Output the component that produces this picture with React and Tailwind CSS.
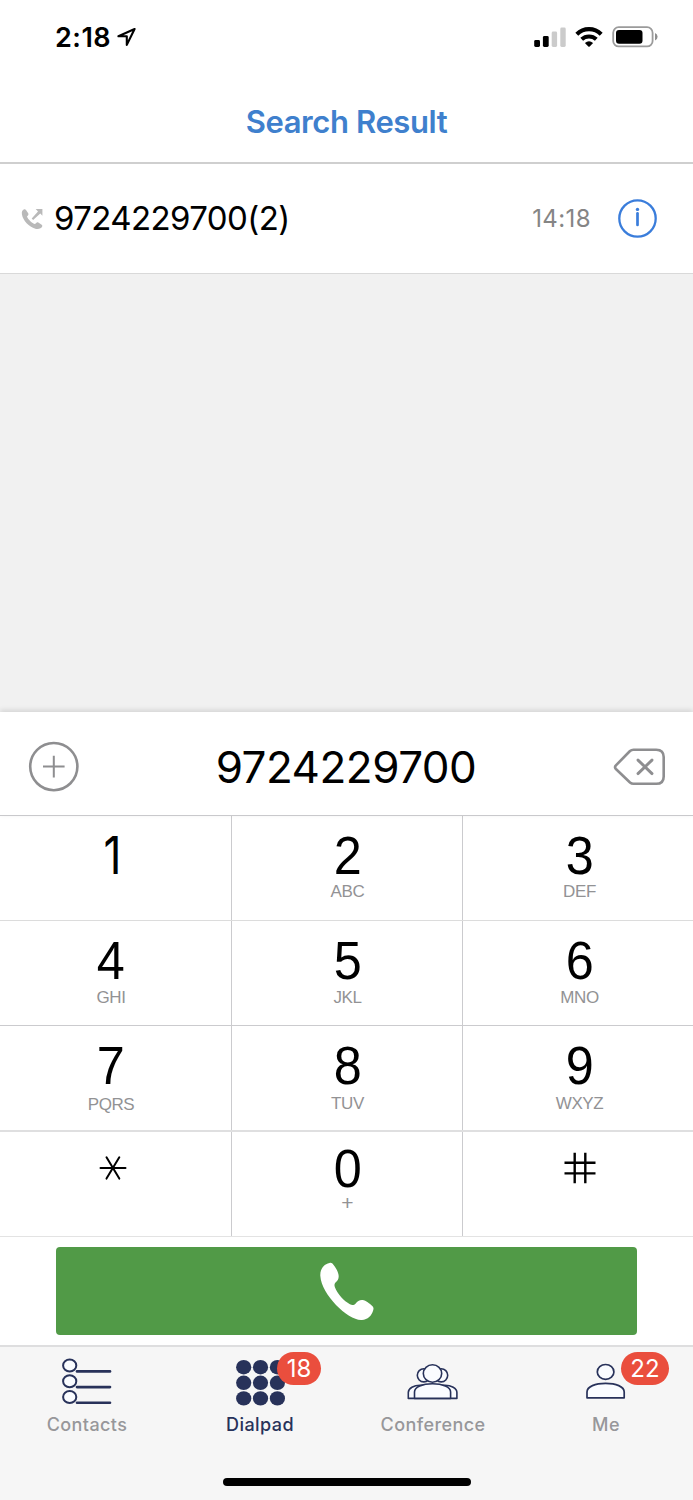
import React from 'react'

const keys = [
  [{ digit: '1', letters: '' }, { digit: '2', letters: 'ABC' }, { digit: '3', letters: 'DEF' }],
  [{ digit: '4', letters: 'GHI' }, { digit: '5', letters: 'JKL' }, { digit: '6', letters: 'MNO' }],
  [{ digit: '7', letters: 'PQRS' }, { digit: '8', letters: 'TUV' }, { digit: '9', letters: 'WXYZ' }],
  [{ digit: '*', letters: '' }, { digit: '0', letters: '+' }, { digit: '#', letters: '' }],
];

const columnClass = [
  'w-[232px] border-r pr-[9px]',
  'w-[231px] border-r pl-px',
  'w-[230px] pl-[3px]',
];

const rowClass = [
  'h-[105px] border-b border-[#dcdcdc]',
  'h-[105px] border-b border-[#cbcbce]',
  'h-[106px] border-b-2 border-[#dfdfe0]',
  'h-[105px] border-b border-[#e3e3e3]',
];

const StatusBar = () => (
  <div className="flex h-[74px] items-center justify-between pl-[55px] pr-[35px]">
    <div className="flex items-center gap-[6px]">
      <span className="text-[27px] leading-none font-semibold tracking-[0.5px]">2:18</span>
      <svg width="20" height="20" viewBox="0 0 20 20" fill="none" stroke="#000" strokeWidth="2.1" strokeLinejoin="round">
        <path d="M17.6 2 L1.4 9.3 H9.8 V17.9 Z" />
      </svg>
    </div>
    <div className="flex items-center">
      <svg width="32" height="20" viewBox="0 0 32 20">
        <rect x="0.2" y="13" width="5.8" height="7" rx="1.4" fill="#000" />
        <rect x="8.9" y="9" width="5.8" height="11" rx="1.4" fill="#000" />
        <rect x="17.7" y="4.5" width="5.4" height="15.5" rx="1.4" fill="#cbcbcb" />
        <rect x="26.3" y="0.5" width="5.4" height="19.5" rx="1.4" fill="#cbcbcb" />
      </svg>
      <svg className="ml-[9px]" width="28" height="20" viewBox="0 0 28 20">
        <path d="M1.8 7.2 A17.3 17.3 0 0 1 26.2 7.2" fill="none" stroke="#000" strokeWidth="4.1" />
        <path d="M6.7 12.3 A10.6 10.6 0 0 1 21.3 12.3" fill="none" stroke="#000" strokeWidth="4" />
        <path d="M9.9 15.9 Q14 12.5 18.1 15.9 L14.7 19.5 Q14 20.1 13.3 19.5 Z" fill="#000" />
      </svg>
      <svg className="ml-[9px]" width="46" height="22" viewBox="0 0 46 22">
        <rect x="1.2" y="1.2" width="39.4" height="19.2" rx="5.5" fill="#fff" stroke="#9b9b9b" strokeWidth="1.8" />
        <rect x="4" y="4" width="26.5" height="13.8" rx="3" fill="#000" />
        <path d="M43 7 Q45.6 8.2 45.6 10.8 Q45.6 13.4 43 14.6 Z" fill="#8f8f8f" />
      </svg>
    </div>
  </div>
);

const CallRow = () => (
  <div className="flex h-[110px] items-center border-b border-[#d9d9d9] pr-9 pl-[21px]">
    <svg width="23" height="22" viewBox="0 0 23 22" fill="#b9b9b9">
      <path d="M3.3 1.2 C1.2 1.6 0.4 4 1 6.8 C2 12.4 8 18.9 14.3 20.7 C17.4 21.5 20.4 20.6 21.3 18.3 C21.5 17.7 21.2 17.2 20.7 16.8 L17.3 14.6 C16.6 14.2 15.8 14.3 15.2 14.9 L14 16.1 C11.2 15.3 7.2 11.6 6 8.5 L7.1 7.2 C7.6 6.6 7.6 5.9 7.2 5.2 L5 1.9 C4.6 1.3 4 1.1 3.3 1.2 Z" />
      <path d="M14.7 1 H21.4 V7.7 L19.3 5.6 L12.1 12 L10.7 10.4 L17 3.5 Z" />
    </svg>
    <span className="ml-[10px] text-[33px] leading-none tracking-[-0.6px] text-black">9724229700(2)</span>
    <span className="ml-auto text-[24px] leading-none tracking-[0.4px] text-[#858585]">14:18</span>
    <svg className="ml-[27px]" width="39" height="39" viewBox="0 0 39 39" fill="none" stroke="#3a7ddb">
      <circle cx="19.5" cy="19.5" r="18.2" strokeWidth="2.3" />
      <path d="M19.5 14.3 V26" strokeWidth="2.7" strokeLinecap="round" />
      <circle cx="19.5" cy="10.4" r="1.7" fill="#3a7ddb" stroke="none" />
    </svg>
  </div>
);

const NumberRow = () => (
  <div className="relative z-10 flex h-[104px] items-center justify-between border-b border-[#c9c9cc] bg-white pr-[28px] pl-7 pt-[6px] shadow-[0_-2px_5px_rgba(0,0,0,0.12)]">
    <svg width="52" height="52" viewBox="0 0 52 52" fill="none" stroke="#8e8e90">
      <circle cx="25.8" cy="25.6" r="23.6" strokeWidth="2.6" />
      <path d="M15 25.6 H36.6 M25.8 14.8 V36.4" strokeWidth="2" />
    </svg>
    <span className="text-[44px] leading-none tracking-[-0.5px] text-black">9724229700</span>
    <svg width="53" height="40" viewBox="0 0 53 40" fill="none" stroke="#8e8e90" strokeLinejoin="round" strokeLinecap="round">
      <path d="M21.5 2.7 H44.3 Q51.7 2.7 51.7 10.1 V29.4 Q51.7 36.8 44.3 36.8 H21.5 Q19.5 36.8 18 35.5 L3.9 22 Q2.2 20.2 3.9 18.4 L18 4 Q19.5 2.7 21.5 2.7 Z" strokeWidth="2.6" />
      <path d="M26 13.1 L40 26.6 M40 13.1 L26 26.6" strokeWidth="2.9" />
    </svg>
  </div>
);

const lettersClass = {
  ABC: 'mt-[11px]',
  DEF: 'mt-[11px]',
  GHI: 'mt-[12px]',
  JKL: 'mt-[12px]',
  MNO: 'mt-[12px]',
  PQRS: 'mt-[14px]',
  TUV: 'mt-[13px]',
  WXYZ: 'mt-[13px]',
};

const Key = ({ digit, letters }) => {
  if (digit === '*') {
    return (
      <svg className="mt-[22px] ml-[4px]" width="28" height="28" viewBox="0 0 28 28" stroke="#000" strokeWidth="2" strokeLinecap="round">
        <path d="M1.5 14 H26.5 M7.5 3.3 L20.3 24.6 M20.3 3.3 L7.5 24.6" />
      </svg>
    );
  }

  if (digit === '#') {
    return (
      <svg className="mt-5" width="32" height="32" viewBox="0 0 32 32" fill="none" stroke="#000" strokeWidth="2.4">
        <path d="M0.5 10.8 H31.5 M0.5 21.4 H31.5 M10.7 0.7 V31.2 M21.3 0.7 V31.2" />
      </svg>
    );
  }

  if (digit === '1') {
    return <span className="mt-[21px] ml-[4px] scale-x-85 text-[52px] leading-[38px] text-black">1</span>;
  }

  return (
    <>
      <span className={`font-['Liberation_Sans',sans-serif] scale-x-95 text-[53px] leading-[38px] text-black ${digit === '0' ? 'mt-[18px]' : 'mt-[21px]'}`}>{digit}</span>
      {letters === '+' ? (
        <span className="font-['Liberation_Sans',sans-serif] mt-[9px] text-[21px] leading-[12px] text-[#929294]">+</span>
      ) : (
        <span className={`font-['Liberation_Sans',sans-serif] text-[17px] leading-[12px] tracking-[-0.4px] text-[#929294] ${lettersClass[letters]}`}>{letters}</span>
      )}
    </>
  );
};

const ContactsIcon = () => (
  <svg width="50" height="48" viewBox="0 0 50 48" fill="#fafcff" stroke="#28325a" strokeWidth="2">
    {[0, 15.7, 31.3].map((y) => (
      <g key={y}>
        <path d={`M15 ${y + 13.4} H48`} strokeWidth="2.6" strokeLinecap="round" />
        <ellipse cx="7.7" cy={y + 7.6} rx="6.6" ry="6" />
      </g>
    ))}
  </svg>
);

const DialpadIcon = () => (
  <svg width="50" height="48" viewBox="0 0 50 48" fill="#28325a">
    {[9.2, 24.8, 40.4].map((y) => (
      [8.7, 25.5, 42.4].map((x) => <ellipse key={`${x}-${y}`} cx={x} cy={y} rx="7.6" ry="7.2" />)
    ))}
  </svg>
);

const ConferenceIcon = () => (
  <svg width="52" height="48" viewBox="0 0 52 48" fill="#fafcff" stroke="#28325a" strokeWidth="1.6" strokeLinejoin="round">
    <ellipse cx="16.8" cy="17.3" rx="6.5" ry="6.6" />
    <ellipse cx="34.2" cy="17.3" rx="6.5" ry="6.6" />
    <path d="M1.3 40.4 V34.5 C1.3 30 7 27.3 13 27.3 H38 C44 27.3 49.9 30 49.9 34.5 V40.4 Z" />
    <path d="M7.5 40.4 V34 C7.5 29 15.5 25.8 25.5 25.8 C35.5 25.8 43.6 29 43.6 34 V40.4 Z" />
    <ellipse cx="25.5" cy="15.5" rx="9.2" ry="8.7" />
  </svg>
);

const MeIcon = () => (
  <svg width="40" height="48" viewBox="0 0 40 48" fill="#fafcff" stroke="#28325a" strokeWidth="1.7" strokeLinejoin="round">
    <ellipse cx="19.6" cy="13.9" rx="8.3" ry="7.4" />
    <path d="M1 39.8 V34 C1 28.5 9.3 25.4 19.6 25.4 C29.9 25.4 38.2 28.5 38.2 34 V39.8 Z" />
  </svg>
);

const tabs = [
  { label: 'Contacts', Icon: ContactsIcon },
  { label: 'Dialpad', Icon: DialpadIcon, badge: 18, badgeClass: 'left-[104px] w-[44px]', active: true },
  { label: 'Conference', Icon: ConferenceIcon },
  { label: 'Me', Icon: MeIcon, badge: 22, badgeClass: 'left-[102px] w-[48px]' },
];

const TabBar = () => (
  <nav className="h-[155px] border-t-2 border-[#dededf] bg-[#f6f6f6]">
    <div className="flex h-[131px]">
      {tabs.map(({ label, Icon, badge, badgeClass, active }) => (
        <div key={label} className="relative flex w-[173px] flex-col items-center pt-[11px]">
          <Icon />
          <span className={`mt-[9px] pl-px text-[18px] leading-5 font-medium ${active ? 'tracking-[0.45px] text-[#28325a]' : 'tracking-[0.4px] text-[#97979a]'}`}>{label}</span>
          {badge && (
            <span className={`absolute top-[5px] flex h-[33px] items-center justify-center rounded-full bg-[#ea4e3d] text-[24px] leading-none text-white ${badgeClass}`}>{badge}</span>
          )}
        </div>
      ))}
    </div>
    <div className="mx-auto h-[8px] w-[248px] rounded-full bg-black" />
  </nav>
);

const App = () => {
  return (
    <div className="flex h-[1500px] w-[693px] flex-col overflow-hidden bg-white font-['Inter',sans-serif] text-black">
      <header className="h-[164px] border-b-2 border-[#cfcfcf]">
        <StatusBar />
        <h1 className="pt-8 text-center text-[31px] leading-8 font-semibold tracking-[-0.4px] text-[#3f80cd]">Search Result</h1>
      </header>
      <CallRow />
      <div className="h-[438px] bg-[#f1f1f1]" />
      <NumberRow />
      {keys.map((row, r) => (
        <div key={r} className={`flex ${rowClass[r]}`}>
          {row.map((key, c) => (
            <div key={key.digit} className={`flex flex-col items-center border-[#cbcbce] ${columnClass[c]}`}>
              <Key {...key} />
            </div>
          ))}
        </div>
      ))}
      <div className="h-[108px] px-14 pt-[10px]">
        <button className="flex h-[88px] w-[581px] items-center justify-center rounded-[4px] bg-[#519a47]">
          <svg width="54" height="58" viewBox="0 0 54 58" fill="#fff">
            <path d="M9.5 0.9 C11.4 0.4 12.3 1.2 13.6 3.1 C16 6.4 18.7 10.5 18.7 14.3 C18.7 17.2 17.4 19 15.5 20.6 C14.3 21.7 14.2 23.4 14.9 25.3 C17 31.3 24.2 39.4 29.9 42.2 C32.2 43.3 34 43.2 35.7 41.4 C37.5 39.4 39.6 37.8 42.6 38.1 C46 38.5 49.7 41.7 52.2 44 C53.5 45.2 53.8 46.3 53.2 48.3 C51.6 54 47.4 58.2 41 58 C27.5 57.5 1.5 33 0.3 13.7 C0 7.3 3.5 2.2 9.5 0.9 Z" />
          </svg>
        </button>
      </div>
      <TabBar />
    </div>
  );
}

export default App;
